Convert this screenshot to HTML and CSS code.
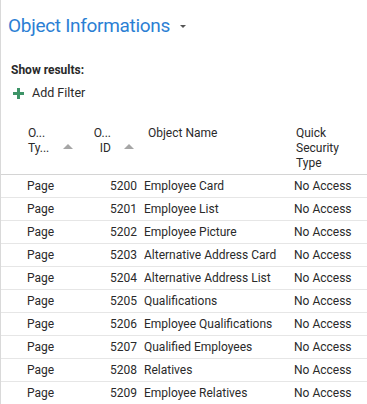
FILE: index.html
```html
<!DOCTYPE html>
<html lang="en">

<head>
  <meta charset="UTF-8">
  <meta name="viewport" content="width=device-width, initial-scale=1.0">
  <title>Object Informations</title>
  <link rel="stylesheet" href="styles.css">
</head>

<body>
  <div class="page">
    <div class="title-bar">
      <h1 class="title">Object Informations</h1>
      <span class="title-caret"></span>
    </div>

    <div class="filter-bar">
      <div class="show-results">Show results:</div>
      <div class="add-filter">
        <svg class="plus" width="11" height="11" viewBox="0 0 11 11">
          <rect x="4" y="0" width="3" height="11" fill="#3d9467"/>
          <rect x="0" y="4" width="11" height="3" fill="#3d9467"/>
        </svg>
        <span>Add Filter</span>
      </div>
    </div>

    <div class="grid">
      <div class="grid-head">
        <div class="hcell h-type">
          <span class="htext">O...<br>Ty...</span>
          <span class="sort"></span>
        </div>
        <div class="hcell h-id">
          <span class="htext">O...<br>ID</span>
          <span class="sort"></span>
        </div>
        <div class="hcell h-name">Object Name</div>
        <div class="hcell h-access">Quick<br>Security<br>Type</div>
      </div>

      <div class="grid-row">
        <div class="cell c-type">Page</div>
        <div class="cell c-id">5200</div>
        <div class="cell c-name">Employee Card</div>
        <div class="cell c-access">No Access</div>
      </div>
      <div class="grid-row">
        <div class="cell c-type">Page</div>
        <div class="cell c-id">5201</div>
        <div class="cell c-name">Employee List</div>
        <div class="cell c-access">No Access</div>
      </div>
      <div class="grid-row">
        <div class="cell c-type">Page</div>
        <div class="cell c-id">5202</div>
        <div class="cell c-name">Employee Picture</div>
        <div class="cell c-access">No Access</div>
      </div>
      <div class="grid-row">
        <div class="cell c-type">Page</div>
        <div class="cell c-id">5203</div>
        <div class="cell c-name">Alternative Address Card</div>
        <div class="cell c-access">No Access</div>
      </div>
      <div class="grid-row">
        <div class="cell c-type">Page</div>
        <div class="cell c-id">5204</div>
        <div class="cell c-name">Alternative Address List</div>
        <div class="cell c-access">No Access</div>
      </div>
      <div class="grid-row">
        <div class="cell c-type">Page</div>
        <div class="cell c-id">5205</div>
        <div class="cell c-name">Qualifications</div>
        <div class="cell c-access">No Access</div>
      </div>
      <div class="grid-row">
        <div class="cell c-type">Page</div>
        <div class="cell c-id">5206</div>
        <div class="cell c-name">Employee Qualifications</div>
        <div class="cell c-access">No Access</div>
      </div>
      <div class="grid-row">
        <div class="cell c-type">Page</div>
        <div class="cell c-id">5207</div>
        <div class="cell c-name">Qualified Employees</div>
        <div class="cell c-access">No Access</div>
      </div>
      <div class="grid-row">
        <div class="cell c-type">Page</div>
        <div class="cell c-id">5208</div>
        <div class="cell c-name">Relatives</div>
        <div class="cell c-access">No Access</div>
      </div>
      <div class="grid-row">
        <div class="cell c-type">Page</div>
        <div class="cell c-id">5209</div>
        <div class="cell c-name">Employee Relatives</div>
        <div class="cell c-access">No Access</div>
      </div>
    </div>
  </div>
</body>

</html>
```

FILE: styles.css
```css
* {
  margin: 0;
  padding: 0;
  box-sizing: border-box;
}

body {
  background-color: white;
  font-family: Roboto, "Open Sans", sans-serif;
  font-size: 12px;
  color: #2a2a2a;
}

.page {
  min-height: 404px;
  border-left: 1px solid #d9d9d9;
}

.title-bar {
  display: flex;
  align-items: center;
  padding: 11px 0 0 7px;
  height: 40px;
}

.title {
  font-size: 19px;
  font-weight: normal;
  color: #2b7fd4;
  line-height: 26px;
  letter-spacing: -0.3px;
}

.title-caret {
  margin-left: 10px;
  margin-top: 2px;
  width: 0;
  height: 0;
  border-left: 3px solid transparent;
  border-right: 3px solid transparent;
  border-top: 3px solid #555;
}

.filter-bar {
  padding: 22px 0 0 10px;
}

.show-results {
  font-weight: bold;
  line-height: 16px;
}

.add-filter {
  display: flex;
  align-items: center;
  margin-top: 6px;
  font-size: 12.5px;
  line-height: 18px;
}

.plus {
  margin: 0 8px 0 2px;
}

.grid-head,
.grid-row {
  display: grid;
  grid-template-columns: 80px 63px 150px 1fr;
}

.grid-head {
  margin-top: 18px;
  padding: 6px 0 3px;
  border-bottom: 1px solid #d4d4d4;
  line-height: 15px;
}

.hcell {
  display: flex;
  align-items: flex-start;
}

.htext {
  display: block;
}

.sort {
  width: 0;
  height: 0;
  margin-top: 18px;
  border-left: 5px solid transparent;
  border-right: 5px solid transparent;
  border-bottom: 5px solid #a6a6a6;
}

.h-type {
  padding-left: 27px;
}

.h-type .sort {
  margin-left: 14px;
}

.h-id {
  justify-content: flex-end;
  padding-right: 10px;
}

.h-id .htext {
  text-align: right;
}

.h-id .sort {
  margin-left: 13px;
}

.h-name {
  padding-left: 4px;
}

.h-access {
  padding-left: 2px;
}

.grid-row {
  height: 23px;
  border-bottom: 1px solid #e6e6e6;
  align-items: center;
}

.cell {
  white-space: nowrap;
  overflow: hidden;
}

.c-type {
  padding-left: 26px;
}

.c-id {
  text-align: right;
  padding-right: 7px;
}
```
